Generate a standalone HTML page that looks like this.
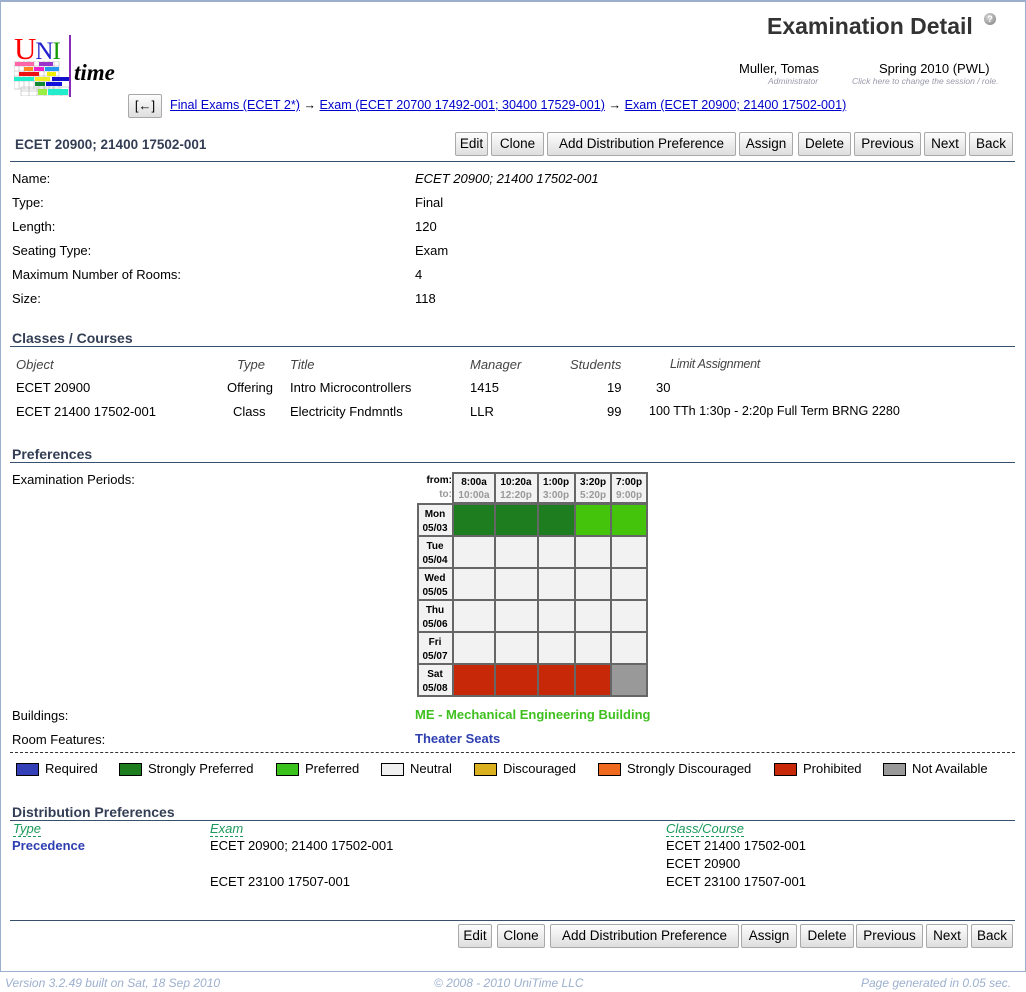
<!DOCTYPE html>
<html><head><meta charset="utf-8"><style>
*{margin:0;padding:0;box-sizing:border-box}
body{width:1026px;height:992px;background:#fff;font-family:"Liberation Sans",sans-serif;font-size:13px;color:#000;position:relative;overflow:hidden}
.a{position:absolute;white-space:nowrap}
.frame{position:absolute;left:0;top:0;width:1026px;height:972px;border:1px solid #9cb0ce;border-top:2px solid #9cb0ce}
.btn{position:absolute;height:24px;border:1px solid #a9a9a9;border-radius:2px;background:linear-gradient(#fdfdfd,#dedede);font-size:13.5px;text-align:center;line-height:22px;color:#000}
.hdr{position:absolute;font-weight:bold;color:#333e55;font-size:14px}
.hl{position:absolute;height:1px;background:#36506e}
a{color:#00c;text-decoration:underline}
.it{font-style:italic;color:#444}
.lg{position:absolute;width:23px;height:13px;border:1px solid #000}
.dh{color:#1a9a5a;font-style:italic;border-bottom:1px dashed #1a9a5a}
</style></head><body>
<div class="frame"></div>

<div class="a" style="left:14px;top:33px;font-family:'Liberation Serif',serif;font-size:31px;line-height:31px;letter-spacing:-1px"><span style="color:#f00">U</span><span style="color:#22c;font-size:25px">N</span><span style="color:#190;font-size:25px">I</span></div>
<div class="a" style="left:69px;top:35px;width:2px;height:62px;background:#8a2ab8"></div>
<svg class="a" style="left:14px;top:61px" width="55" height="35" viewBox="0 0 55 35">
<g stroke="#999" stroke-width=".4" fill="none">
<rect x="0" y="0" width="45" height="28"/><rect x="7" y="26" width="48" height="9"/>
<path d="M0 5H45M0 10H45M0 15H45M0 20H45M5 0V28M10 0V28M15 0V28M20 0V28M25 0V28M30 0V28M35 0V28M40 0V28M7 30H55M15 26V35M23 26V35M31 26V35M39 26V35M47 26V35"/>
</g>
<rect x="1" y="1" width="19" height="4" fill="#f6a"/><rect x="25" y="1" width="14" height="4" fill="#93c"/>
<rect x="10" y="6" width="9" height="4" fill="#f82"/><rect x="20" y="6" width="10" height="4" fill="#e2c"/><rect x="31" y="6" width="14" height="4" fill="#29e"/>
<rect x="5" y="11" width="20" height="4" fill="#e11"/><rect x="33" y="11" width="9" height="4" fill="#ee0"/>
<rect x="0" y="16" width="20" height="4" fill="#2ec"/><rect x="21" y="16" width="15" height="4" fill="#ee2"/><rect x="38" y="16" width="17" height="4" fill="#11c"/>
<rect x="21" y="21" width="10" height="4" fill="#183"/><rect x="32" y="21" width="16" height="4" fill="#11d"/>
<rect x="24" y="28" width="9" height="6" fill="#9e4"/><rect x="34" y="28" width="20" height="6" fill="#2ec"/>
</svg>
<div class="a" style="left:74px;top:60px;font-family:'Liberation Serif',serif;font-style:italic;font-weight:bold;font-size:23px">time</div>

<div class="a" style="left:767px;top:13px;font-size:23px;font-weight:bold;color:#333">Examination Detail</div>
<div class="a" style="left:984px;top:13px;width:12px;height:12px;border-radius:6px;background:radial-gradient(circle at 40% 35%,#ddd,#777);color:#fff;font-size:9px;text-align:center;line-height:12px;font-weight:bold">?</div>
<div class="a" style="left:739px;top:61px;font-size:13px">Muller, Tomas</div>
<div class="a" style="left:768px;top:76px;font-size:8.5px;font-style:italic;color:#99a">Administrator</div>
<div class="a" style="left:879px;top:61px;font-size:13px">Spring 2010 (PWL)</div>
<div class="a" style="left:852px;top:76px;font-size:8.5px;font-style:italic;color:#99a">Click here to change the session / role.</div>

<div class="btn" style="left:128px;top:94px;width:34px;font-size:13px">[←]</div>
<div class="a" style="left:170px;top:98px;font-size:12.6px"><a>Final Exams (ECET 2*)</a> → <a>Exam (ECET 20700 17492-001; 30400 17529-001)</a> → <a>Exam (ECET 20900; 21400 17502-001)</a></div>

<div class="hdr" style="left:15px;top:137px;font-size:13.5px">ECET 20900; 21400 17502-001</div>
<div class="btn" style="left:455px;top:132px;width:33px">Edit</div>
<div class="btn" style="left:491px;top:132px;width:53px">Clone</div>
<div class="btn" style="left:547px;top:132px;width:189px">Add Distribution Preference</div>
<div class="btn" style="left:739px;top:132px;width:54px">Assign</div>
<div class="btn" style="left:798px;top:132px;width:53px">Delete</div>
<div class="btn" style="left:854px;top:132px;width:67px">Previous</div>
<div class="btn" style="left:924px;top:132px;width:42px">Next</div>
<div class="btn" style="left:969px;top:132px;width:44px">Back</div>
<div class="hl" style="left:10px;top:161px;width:1005px"></div>

<div class="a" style="left:12px;top:171px">Name:</div><div class="a" style="left:415px;top:171px;font-style:italic">ECET 20900; 21400 17502-001</div>
<div class="a" style="left:12px;top:195px">Type:</div><div class="a" style="left:415px;top:195px">Final</div>
<div class="a" style="left:12px;top:219px">Length:</div><div class="a" style="left:415px;top:219px">120</div>
<div class="a" style="left:12px;top:243px">Seating Type:</div><div class="a" style="left:415px;top:243px">Exam</div>
<div class="a" style="left:12px;top:267px">Maximum Number of Rooms:</div><div class="a" style="left:415px;top:267px">4</div>
<div class="a" style="left:12px;top:291px">Size:</div><div class="a" style="left:415px;top:291px">118</div>

<div class="hdr" style="left:12px;top:330px">Classes / Courses</div>
<div class="hl" style="left:10px;top:346px;width:1005px"></div>
<div class="a it" style="left:16px;top:357px">Object</div>
<div class="a it" style="left:237px;top:357px">Type</div>
<div class="a it" style="left:290px;top:357px">Title</div>
<div class="a it" style="left:470px;top:357px">Manager</div>
<div class="a it" style="left:570px;top:357px">Students</div>
<div class="a it" style="left:670px;top:357px;font-size:12.5px;letter-spacing:-0.3px">Limit Assignment</div>
<div class="a" style="left:16px;top:380px">ECET 20900</div>
<div class="a" style="left:227px;top:380px">Offering</div>
<div class="a" style="left:290px;top:380px">Intro Microcontrollers</div>
<div class="a" style="left:470px;top:380px">1415</div>
<div class="a" style="left:607px;top:380px">19</div>
<div class="a" style="left:656px;top:380px">30</div>
<div class="a" style="left:16px;top:404px">ECET 21400 17502-001</div>
<div class="a" style="left:233px;top:404px">Class</div>
<div class="a" style="left:290px;top:404px">Electricity Fndmntls</div>
<div class="a" style="left:470px;top:404px">LLR</div>
<div class="a" style="left:607px;top:404px">99</div>
<div class="a" style="left:649px;top:404px;font-size:12.6px">100 TTh 1:30p - 2:20p Full Term BRNG 2280</div>

<div class="hdr" style="left:12px;top:446px">Preferences</div>
<div class="hl" style="left:10px;top:462px;width:1005px"></div>
<div class="a" style="left:12px;top:472px">Examination Periods:</div>

<div class="a" style="left:418px;top:474px;font-size:10px;font-weight:bold;text-align:right;width:34px;line-height:14px">from:<br><span style="color:#999">to:</span></div>
<svg class="a" style="left:417px;top:472px" width="232" height="226">
<g stroke="#666" stroke-width="2">
<rect x="36" y="1" width="194" height="30" fill="#f2f2f2"/>
<line x1="78" y1="1" x2="78" y2="31"/><line x1="121" y1="1" x2="121" y2="31"/><line x1="158" y1="1" x2="158" y2="31"/><line x1="194" y1="1" x2="194" y2="31"/>
<rect x="1" y="32" width="35" height="192" fill="#f2f2f2"/>
<line x1="1" y1="64" x2="36" y2="64"/><line x1="1" y1="96" x2="36" y2="96"/><line x1="1" y1="128" x2="36" y2="128"/><line x1="1" y1="160" x2="36" y2="160"/><line x1="1" y1="192" x2="36" y2="192"/>
<rect x="36" y="32" width="42" height="32" fill="#1e7d1e"/><rect x="78" y="32" width="43" height="32" fill="#1e7d1e"/><rect x="121" y="32" width="37" height="32" fill="#1e7d1e"/><rect x="158" y="32" width="36" height="32" fill="#44c40b"/><rect x="194" y="32" width="36" height="32" fill="#44c40b"/>
<g fill="#f2f2f2">
<rect x="36" y="64" width="42" height="32"/><rect x="78" y="64" width="43" height="32"/><rect x="121" y="64" width="37" height="32"/><rect x="158" y="64" width="36" height="32"/><rect x="194" y="64" width="36" height="32"/>
<rect x="36" y="96" width="42" height="32"/><rect x="78" y="96" width="43" height="32"/><rect x="121" y="96" width="37" height="32"/><rect x="158" y="96" width="36" height="32"/><rect x="194" y="96" width="36" height="32"/>
<rect x="36" y="128" width="42" height="32"/><rect x="78" y="128" width="43" height="32"/><rect x="121" y="128" width="37" height="32"/><rect x="158" y="128" width="36" height="32"/><rect x="194" y="128" width="36" height="32"/>
<rect x="36" y="160" width="42" height="32"/><rect x="78" y="160" width="43" height="32"/><rect x="121" y="160" width="37" height="32"/><rect x="158" y="160" width="36" height="32"/><rect x="194" y="160" width="36" height="32"/>
</g>
<rect x="36" y="192" width="42" height="32" fill="#c62808"/><rect x="78" y="192" width="43" height="32" fill="#c62808"/><rect x="121" y="192" width="37" height="32" fill="#c62808"/><rect x="158" y="192" width="36" height="32" fill="#c62808"/><rect x="194" y="192" width="36" height="32" fill="#999"/>
</g>
<g font-family="Liberation Sans" font-size="10" font-weight="bold" text-anchor="middle">
<text x="57" y="13">8:00a</text><text x="99" y="13">10:20a</text><text x="139" y="13">1:00p</text><text x="176" y="13">3:20p</text><text x="212" y="13">7:00p</text>
<g fill="#999"><text x="57" y="26">10:00a</text><text x="99" y="26">12:20p</text><text x="139" y="26">3:00p</text><text x="176" y="26">5:20p</text><text x="212" y="26">9:00p</text></g>
<text x="18" y="45">Mon</text><text x="18" y="59">05/03</text>
<text x="18" y="77">Tue</text><text x="18" y="91">05/04</text>
<text x="18" y="109">Wed</text><text x="18" y="123">05/05</text>
<text x="18" y="141">Thu</text><text x="18" y="155">05/06</text>
<text x="18" y="173">Fri</text><text x="18" y="187">05/07</text>
<text x="18" y="205">Sat</text><text x="18" y="219">05/08</text>
</g>
</svg>

<div class="a" style="left:12px;top:708px">Buildings:</div>
<div class="a" style="left:415px;top:707px;font-weight:bold;color:#3fc01e">ME - Mechanical Engineering Building</div>
<div class="a" style="left:12px;top:732px">Room Features:</div>
<div class="a" style="left:415px;top:731px;font-weight:bold;color:#2e3fb0">Theater Seats</div>
<div class="a" style="left:10px;top:752px;width:1005px;border-top:1px dashed #333"></div>

<div class="lg" style="left:16px;top:763px;background:#3340b8"></div><div class="a" style="left:45px;top:761px">Required</div>
<div class="lg" style="left:119px;top:763px;background:#1e7d1e"></div><div class="a" style="left:148px;top:761px">Strongly Preferred</div>
<div class="lg" style="left:276px;top:763px;background:#3ac11c"></div><div class="a" style="left:305px;top:761px">Preferred</div>
<div class="lg" style="left:381px;top:763px;background:#f0f0f0"></div><div class="a" style="left:410px;top:761px">Neutral</div>
<div class="lg" style="left:474px;top:763px;background:#dab01e"></div><div class="a" style="left:503px;top:761px">Discouraged</div>
<div class="lg" style="left:598px;top:763px;background:#ef6a1e"></div><div class="a" style="left:627px;top:761px">Strongly Discouraged</div>
<div class="lg" style="left:774px;top:763px;background:#c62808"></div><div class="a" style="left:803px;top:761px">Prohibited</div>
<div class="lg" style="left:883px;top:763px;background:#999"></div><div class="a" style="left:912px;top:761px">Not Available</div>

<div class="hdr" style="left:12px;top:804px">Distribution Preferences</div>
<div class="hl" style="left:10px;top:820px;width:1005px"></div>
<div class="a dh" style="left:13px;top:821px">Type</div>
<div class="a dh" style="left:210px;top:821px">Exam</div>
<div class="a dh" style="left:666px;top:821px">Class/Course</div>
<div class="a" style="left:12px;top:838px;font-weight:bold;color:#2e3fb0">Precedence</div>
<div class="a" style="left:210px;top:838px">ECET 20900; 21400 17502-001</div>
<div class="a" style="left:210px;top:874px">ECET 23100 17507-001</div>
<div class="a" style="left:666px;top:838px">ECET 21400 17502-001</div>
<div class="a" style="left:666px;top:856px">ECET 20900</div>
<div class="a" style="left:666px;top:874px">ECET 23100 17507-001</div>

<div class="hl" style="left:10px;top:920px;width:1005px"></div>
<div class="btn" style="left:458px;top:924px;width:34px">Edit</div>
<div class="btn" style="left:497px;top:924px;width:48px">Clone</div>
<div class="btn" style="left:550px;top:924px;width:189px">Add Distribution Preference</div>
<div class="btn" style="left:741px;top:924px;width:56px">Assign</div>
<div class="btn" style="left:800px;top:924px;width:54px">Delete</div>
<div class="btn" style="left:856px;top:924px;width:67px">Previous</div>
<div class="btn" style="left:926px;top:924px;width:42px">Next</div>
<div class="btn" style="left:971px;top:924px;width:42px">Back</div>

<div class="a" style="left:5px;top:976px;font-size:12px;font-style:italic;color:#9cb0ce">Version 3.2.49 built on Sat, 18 Sep 2010</div>
<div class="a" style="left:434px;top:976px;font-size:12px;font-style:italic;color:#9cb0ce">© 2008 - 2010 UniTime LLC</div>
<div class="a" style="left:861px;top:976px;font-size:12px;font-style:italic;color:#9cb0ce">Page generated in 0.05 sec.</div>
</body></html>
